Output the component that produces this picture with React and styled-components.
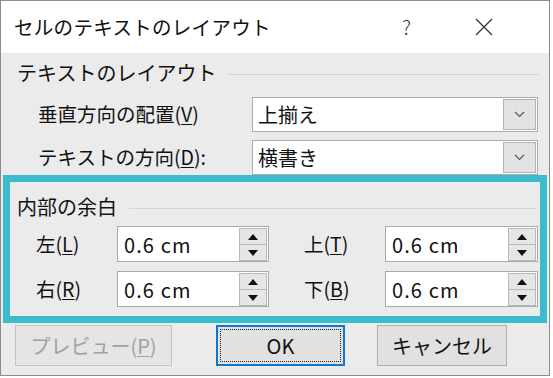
import React from "react";
import styled, { createGlobalStyle } from "styled-components";

const GlobalStyle = createGlobalStyle`
  html, body {
    margin: 0;
    padding: 0;
    background: #ffffff;
  }
  * {
    box-sizing: border-box;
  }
`;

const FONT = `"Noto Sans CJK JP", "Noto Sans", sans-serif`;

const Window = styled.div`
  width: 550px;
  height: 376px;
  border: 1px solid #8c8c8c;
  display: flex;
  flex-direction: column;
  font-family: ${FONT};
  color: #111;
  background: #ebebeb;
`;

const TitleBar = styled.div`
  height: 52px;
  display: flex;
  align-items: center;
  padding-left: 13px;
  background: #ffffff;
`;

const Title = styled.div`
  flex: 1;
  font-size: 19.5px;
  line-height: 1;
  letter-spacing: 0.3px;
  color: #111;
`;

const HelpMark = styled.div`
  width: 14px;
  font-size: 20px;
  font-weight: 300;
  color: #333;
  margin-right: 59px;
  line-height: 1;
`;

const CloseButton = styled.div`
  width: 18px;
  height: 18px;
  margin-right: 56px;
  display: flex;
`;

const Body = styled.div`
  flex: 1;
  padding: 6px 2px 0 2px;
  display: flex;
  flex-direction: column;
`;

const Group = styled.div`
  padding: 0 8px 0 14px;
`;

const GroupHeader = styled.div`
  display: flex;
  align-items: center;
  height: 28px;
`;

const GroupLabel = styled.div`
  font-size: 20px;
  line-height: 28px;
  color: #111;
`;

const Rule = styled.div`
  flex: 1;
  height: 1px;
  margin-left: 12px;
  margin-top: 3px;
  background: #d6d6d6;
`;

const ComboRow = styled.div`
  display: flex;
  align-items: center;
  height: 35px;
  padding-left: 21px;
  margin-top: ${(p) => p.$top}px;
`;

const RowLabel = styled.div`
  width: 214px;
  font-size: 19.5px;
  line-height: 1;
  color: #111;
  margin-top: -2px;
`;

const Combo = styled.div`
  width: 286px;
  height: 35px;
  border: 1px solid #acacac;
  background: #fff;
  display: flex;
  align-items: center;
  padding: 1px 1px 1px 5px;
`;

const ComboValue = styled.div`
  flex: 1;
  font-size: 20px;
  line-height: 1;
  color: #111;
`;

const DropButton = styled.div`
  width: 33px;
  height: 31px;
  border: 1px solid #b4b4b4;
  background: #e3e3e3;
  display: flex;
  align-items: center;
  justify-content: center;
`;

const Highlight = styled.div`
  width: 544px;
  border: 7px solid #3abccc;
  padding: 11px 3px 9px 7px;
`;

const MarginGrid = styled.div`
  display: grid;
  grid-template-columns: 233px 234px;
  grid-auto-rows: 36px;
  column-gap: 35px;
  row-gap: 9px;
  margin-top: 5px;
  padding-left: 19px;
`;

const Field = styled.div`
  display: flex;
  align-items: center;
`;

const FieldLabel = styled.div`
  width: 81px;
  font-size: 19.5px;
  line-height: 1;
  color: #111;
`;

const SpinBox = styled.div`
  flex: 1;
  height: 36px;
  border: 1px solid #a9a9a9;
  background: #fff;
  display: flex;
  align-items: center;
  padding: 1px 1px 0 6px;
`;

const SpinValue = styled.div`
  flex: 1;
  font-size: 20px;
  line-height: 1;
  color: #111;
  letter-spacing: 1.1px;
`;

const Spinner = styled.div`
  width: 28px;
  height: 33px;
  display: flex;
  flex-direction: column;
`;

const SpinButton = styled.div`
  flex: 1;
  border: 1px solid #b9b9b9;
  background: #e6e6e6;
  display: flex;
  align-items: center;
  justify-content: center;
  & + & {
    border-top: none;
  }
`;

const ButtonBar = styled.div`
  display: flex;
  margin-top: 2px;
  padding-left: 12px;
`;

const Button = styled.div`
  position: relative;
  width: ${(p) => p.$width}px;
  height: 41px;
  margin-left: ${(p) => p.$gap || 0}px;
  border: ${(p) => (p.$default ? "2px" : "1px")} solid;
  border-color: ${(p) => (p.$disabled ? "#c4c4c4" : p.$default ? "#0a78d7" : "#adadad")};
  background: ${(p) => (p.$disabled ? "#e5e5e5" : "#e1e1e1")};
  color: ${(p) => (p.$disabled ? "#a0a0a0" : "#111")};
  font-size: 20px;
  display: flex;
  align-items: center;
  justify-content: center;
  line-height: 1;
  ${(p) =>
    p.$default &&
    `
    &::after {
      content: "";
      position: absolute;
      inset: 2px;
      border: 1px dotted #222;
    }
  `}
`;

const Key = styled.span`
  text-decoration: underline;
  text-underline-offset: 2px;
  text-decoration-thickness: 1px;
`;

const Chevron = () => (
  <svg width="11" height="7" viewBox="0 0 11 7">
    <polyline points="1,1 5.5,5.5 10,1" fill="none" stroke="#555" strokeWidth="1.2" />
  </svg>
);

const Arrow = ({ up }) => (
  <svg width="10" height="6" viewBox="0 0 10 6">
    <polygon points={up ? "0,6 10,6 5,0" : "0,0 10,0 5,6"} fill="#111" />
  </svg>
);

const CloseIcon = () => (
  <svg width="18" height="18" viewBox="0 0 18 18">
    <line x1="1" y1="1" x2="17" y2="17" stroke="#333" strokeWidth="1.2" />
    <line x1="17" y1="1" x2="1" y2="17" stroke="#333" strokeWidth="1.2" />
  </svg>
);

const comboRows = [
  { label: "垂直方向の配置", key: "V", suffix: "", value: "上揃え", top: 10 },
  { label: "テキストの方向", key: "D", suffix: ":", value: "横書き", top: 8 },
];

const margins = [
  { label: "左", key: "L" },
  { label: "上", key: "T" },
  { label: "右", key: "R" },
  { label: "下", key: "B" },
];

const App = () => {
  return (
    <>
      <GlobalStyle />
      <Window>
        <TitleBar>
          <Title>セルのテキストのレイアウト</Title>
          <HelpMark>?</HelpMark>
          <CloseButton>
            <CloseIcon />
          </CloseButton>
        </TitleBar>
        <Body>
          <Group>
            <GroupHeader>
              <GroupLabel>テキストのレイアウト</GroupLabel>
              <Rule />
            </GroupHeader>
            {comboRows.map((row) => (
              <ComboRow key={row.key} $top={row.top}>
                <RowLabel>
                  {row.label}(<Key>{row.key}</Key>){row.suffix}
                </RowLabel>
                <Combo>
                  <ComboValue>{row.value}</ComboValue>
                  <DropButton>
                    <Chevron />
                  </DropButton>
                </Combo>
              </ComboRow>
            ))}
          </Group>
          <Highlight>
            <GroupHeader>
              <GroupLabel>内部の余白</GroupLabel>
              <Rule />
            </GroupHeader>
            <MarginGrid>
              {margins.map((m) => (
                <Field key={m.key}>
                  <FieldLabel>
                    {m.label}(<Key>{m.key}</Key>)
                  </FieldLabel>
                  <SpinBox>
                    <SpinValue>0.6 cm</SpinValue>
                    <Spinner>
                      <SpinButton>
                        <Arrow up />
                      </SpinButton>
                      <SpinButton>
                        <Arrow />
                      </SpinButton>
                    </Spinner>
                  </SpinBox>
                </Field>
              ))}
            </MarginGrid>
          </Highlight>
          <ButtonBar>
            <Button $width={157} $disabled>
              プレビュー(<Key>P</Key>)
            </Button>
            <Button $width={129} $gap={44} $default>
              OK
            </Button>
            <Button $width={130} $gap={32}>
              キャンセル
            </Button>
          </ButtonBar>
        </Body>
      </Window>
    </>
  );
};

export default App;
